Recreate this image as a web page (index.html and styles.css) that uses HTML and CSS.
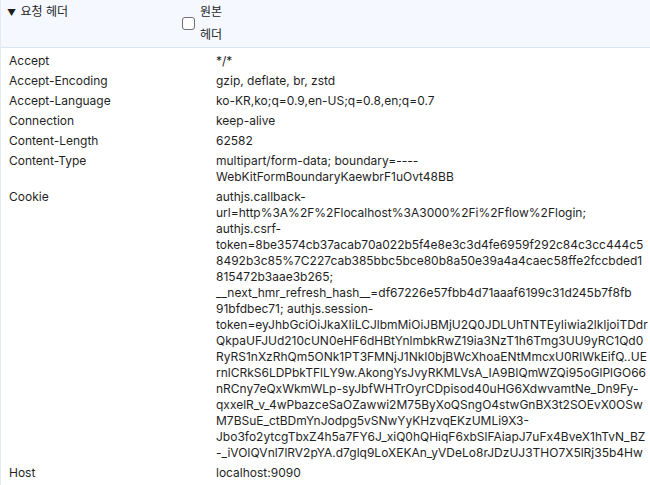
FILE: index.html
```html
<!DOCTYPE html>
<html lang="ko">
<head>
<meta charset="utf-8">
<title>요청 헤더</title>
<link rel="stylesheet" href="styles.css">
</head>
<body>
<section class="panel">
  <header class="panel-head">
    <div class="title"><span class="arrow">▼</span> 요청 헤더</div>
    <label class="raw">
      <input type="checkbox" class="check">
      <span class="raw-text">원본 헤더</span>
    </label>
  </header>
  <div class="rows">
    <div class="row"><div class="name">Accept</div><div class="value">*/*</div></div>
    <div class="row"><div class="name">Accept-Encoding</div><div class="value">gzip, deflate, br, zstd</div></div>
    <div class="row"><div class="name">Accept-Language</div><div class="value">ko-KR,ko;q=0.9,en-US;q=0.8,en;q=0.7</div></div>
    <div class="row"><div class="name">Connection</div><div class="value">keep-alive</div></div>
    <div class="row"><div class="name">Content-Length</div><div class="value">62582</div></div>
    <div class="row"><div class="name">Content-Type</div><div class="value">multipart/form-data; boundary=----<br>WebKitFormBoundaryKaewbrF1uOvt48BB</div></div>
    <div class="row"><div class="name">Cookie</div><div class="value">authjs.callback-<br>url=http%3A%2F%2Flocalhost%3A3000%2Fi%2Fflow%2Flogin;<br>authjs.csrf-<br>token=8be3574cb37acab70a022b5f4e8e3c3d4fe6959f292c84c3cc444c5<br>8492b3c85%7C227cab385bbc5bce80b8a50e39a4a4caec58ffe2fccbded1<br>815472b3aae3b265;<br>__next_hmr_refresh_hash__=df67226e57fbb4d71aaaf6199c31d245b7f8fb<br>91bfdbec71; authjs.session-<br>token=eyJhbGciOiJkaXIiLCJlbmMiOiJBMjU2Q0JDLUhTNTEyIiwia2lkIjoiTDdr<br>QkpaUFJUd210cUN0eHF6dHBtYnlmbkRwZ19ia3NzT1h6Tmg3UU9yRC1Qd0<br>RyRS1nXzRhQm5ONk1PT3FMNjJ1NkI0bjBWcXhoaENtMmcxU0RlWkEifQ..UE<br>rnlCRkS6LDPbkTFlLY9w.AkongYsJvyRKMLVsA_IA9BIQmWZQi95oGlPlGO66<br>nRCny7eQxWkmWLp-syJbfWHTrOyrCDpisod40uHG6XdwvamtNe_Dn9Fy-<br>qxxelR_v_4wPbazceSaOZawwi2M75ByXoQSngO4stwGnBX3t2SOEvX0OSw<br>M7BSuE_ctBDmYnJodpg5vSNwYyKHzvqEKzUMLi9X3-<br>Jbo3fo2ytcgTbxZ4h5a7FY6J_xiQ0hQHiqF6xbSlFAiapJ7uFx4BveX1hTvN_BZ<br>-_iVOIQVnl7lRV2pYA.d7glq9LoXEKAn_yVDeLo8rJDzUJ3THO7X5lRj35b4Hw</div></div>
    <div class="row"><div class="name">Host</div><div class="value">localhost:9090</div></div>
  </div>
</section>
</body>
</html>
```
FILE: styles.css
```css
html, body {
  margin: 0;
  padding: 0;
  background: #ffffff;
}
body {
  font-family: Inter, "Noto Sans CJK KR", "Liberation Sans", sans-serif;
  font-size: 12px;
  color: #1f1f1f;
}
.panel {
  border-left: 1px solid #e4eaf4;
  min-height: 485px;
  box-sizing: border-box;
}
.panel-head {
  display: flex;
  align-items: flex-start;
  background: #f5f8fe;
  border-bottom: 1px solid #dce5f4;
  padding: 0 6px 1px;
}
.title {
  width: 175px;
  line-height: 23px;
}
.arrow {
  font-size: 9px;
  margin-right: 1px;
}
.raw {
  display: flex;
  align-items: center;
}
.check {
  appearance: none;
  -webkit-appearance: none;
  width: 13px;
  height: 13px;
  margin: 0 5px 0 0;
  border: 1px solid #6f6f6f;
  border-radius: 3px;
  background: #ffffff;
  box-sizing: border-box;
}
.raw-text {
  width: 28px;
  line-height: 23px;
}
.rows {
  padding-top: 3px;
}
.row {
  display: grid;
  grid-template-columns: 207px 1fr;
  padding: 2px 4px 2px 8px;
  line-height: 16px;
}
.value {
  white-space: nowrap;
}
```
